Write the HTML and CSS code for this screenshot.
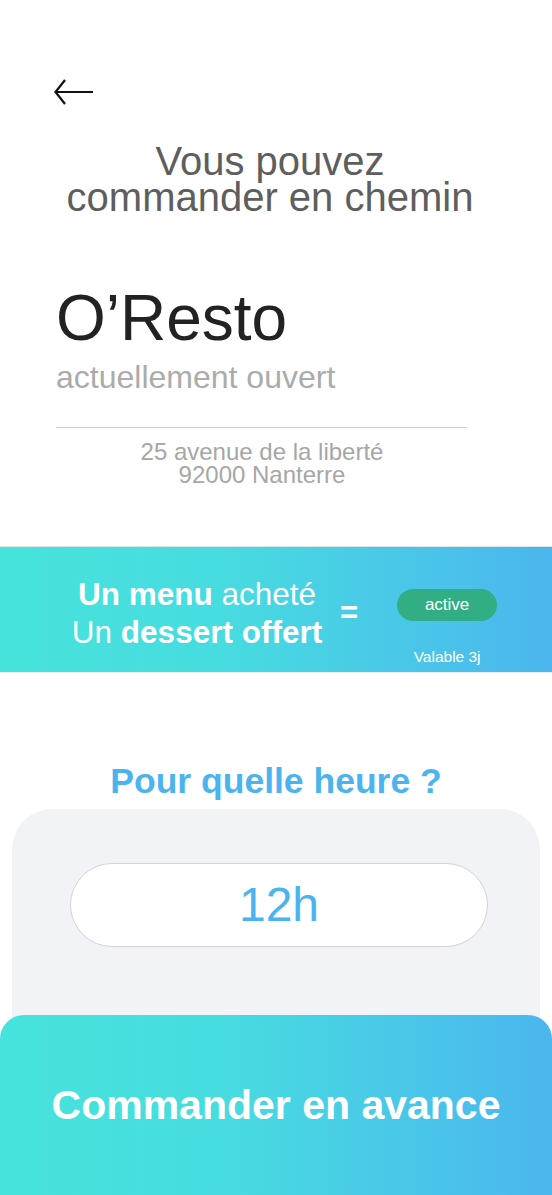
FILE: index.html
```html
<!DOCTYPE html>
<html lang="fr">
<head>
<meta charset="utf-8">
<title>O'Resto</title>
<link rel="stylesheet" href="styles.css">
</head>
<body>
<div class="page">
  <header class="top">
    <svg class="back" width="40" height="28" viewBox="0 0 40 28" aria-label="Retour">
      <path d="M11 2 L1.5 14 L11 26 M1.5 14 H39" fill="none" stroke="#111" stroke-width="2.2" stroke-linecap="butt" stroke-linejoin="miter"/>
    </svg>
    <h1 class="title">Vous pouvez<br>commander en chemin</h1>
    <h2 class="name">O’Resto</h2>
    <p class="status">actuellement ouvert</p>
    <div class="divider"></div>
    <p class="address">25 avenue de la liberté<br>92000 Nanterre</p>
  </header>

  <section class="promo">
    <p class="promo-text"><b>Un menu</b> acheté<br>Un <b>dessert offert</b></p>
    <span class="equals">=</span>
    <div class="promo-side">
      <span class="pill">active</span>
      <span class="valid">Valable 3j</span>
    </div>
  </section>

  <h3 class="question">Pour quelle heure ?</h3>
  <section class="panel">
    <div class="time">12h</div>
  </section>
  <button class="cta">Commander en avance</button>
</div>
</body>
</html>
```

FILE: styles.css
```css
* { box-sizing: border-box; }
html, body { margin: 0; padding: 0; background: #fff; }
body {
  font-family: "Liberation Sans", Arial, sans-serif;
  width: 552px;
  height: 1195px;
  overflow: hidden;
}
.page { display: flex; flex-direction: column; }

.top {
  display: flex;
  flex-direction: column;
  padding: 78px 68px 0 54px;
}
.back { display: block; }
.title {
  margin: 37px 0 0 2px;
  font-weight: 400;
  font-size: 40px;
  line-height: 36px;
  color: #5e5e5e;
  text-align: center;
}
.name {
  margin: 71px 0 0 2px;
  font-weight: 400;
  font-size: 64px;
  line-height: 64px;
  color: #222;
}
.status {
  margin: 9px 0 0 2px;
  font-size: 32px;
  line-height: 36px;
  color: #ababab;
}
.divider {
  margin: 32px 0 0 2px;
  width: 411px;
  height: 1px;
  background: #cfcfcf;
}
.address {
  margin: 12px 0 0 2px;
  width: 412px;
  font-size: 24px;
  line-height: 23px;
  color: #a6a6a6;
  text-align: center;
}

.promo {
  margin-top: 60px;
  height: 127px;
  border-top: 1px solid #e2e2e2;
  border-bottom: 1px solid #ececec;
  background: linear-gradient(90deg, #46e3dc 0%, #47dce0 40%, #4bb6ee 100%);
  display: flex;
  align-items: flex-start;
  padding: 28px 0 0 69px;
  color: #fff;
}
.promo-text {
  margin: 0;
  width: 256px;
  font-size: 31.5px;
  line-height: 38px;
  text-align: center;
}
.equals {
  margin: 19px 0 0 15px;
  font-size: 31px;
  font-weight: 700;
  line-height: 38px;
}
.promo-side {
  margin: 14px 0 0 39px;
  width: 100px;
  display: flex;
  flex-direction: column;
  align-items: center;
}
.pill {
  width: 100px;
  height: 32px;
  border-radius: 16px;
  background: #31ae84;
  font-size: 17px;
  line-height: 32px;
  text-align: center;
}
.valid {
  margin-top: 27px;
  font-size: 15.5px;
  line-height: 18px;
}

.question {
  margin: 88px 0 0;
  font-size: 35.5px;
  line-height: 40px;
  font-weight: 700;
  color: #4bb4ee;
  text-align: center;
}
.panel {
  margin: 8px 12px 0;
  padding: 54px 52px 98px 58px;
  background: #f2f3f7;
  border-radius: 40px 40px 0 0;
}
.time {
  height: 84px;
  border: 1px solid #d4d4d8;
  border-radius: 42px;
  background: #fff;
  color: #4ab4ee;
  font-size: 48px;
  line-height: 82px;
  text-align: center;
}
.cta {
  position: relative;
  z-index: 1;
  margin-top: -30px;
  height: 180px;
  width: 552px;
  border: 0;
  border-radius: 24px 24px 0 0;
  background: linear-gradient(90deg, #46e3dc 0%, #47dce0 40%, #4bb6ee 100%);
  color: #fff;
  font-family: "Liberation Sans", Arial, sans-serif;
  font-weight: 700;
  font-size: 41px;
  line-height: 48px;
  padding: 0;
  text-align: center;
}
```
